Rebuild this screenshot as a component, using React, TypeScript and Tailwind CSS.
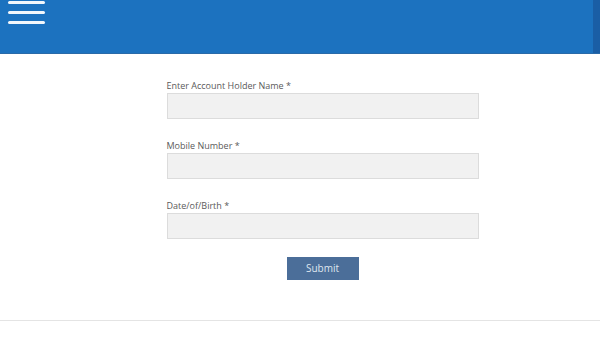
export default function App() {
  const fields = ["Enter Account Holder Name *", "Mobile Number *", "Date/of/Birth *"];
  return (
    <div className="h-[337px] w-[600px] overflow-hidden bg-white font-['Open_Sans',sans-serif]">
      <header className="flex h-[54px] border-b border-[#2a6aa8] bg-[#1c72bf]">
        <div className="flex flex-1 flex-col gap-[7px] pl-2 pt-[1px]">
          <span className="h-[3px] w-[37px] rounded-sm bg-[#f2f7fc]" />
          <span className="h-[3px] w-[37px] rounded-sm bg-[#f2f7fc]" />
          <span className="h-[3px] w-[37px] rounded-sm bg-[#f2f7fc]" />
        </div>
        <div className="w-[7px] bg-[#1a5ea5]" />
      </header>

      <main className="flex h-[267px] flex-col items-center border-b border-[#e4e4e4] pl-[45px]">
        <form className="mt-[26px] flex w-[312px] flex-col gap-[21px]">
          {fields.map((label) => (
            <div key={label} className="flex flex-col">
              <label className="mb-[1px] text-[9px] leading-[12px] text-[#5a5a5a]">{label}</label>
              <input className="h-[26px] w-full border border-[#dcdcdc] bg-[#f1f1f1]" />
            </div>
          ))}
        </form>
        <button className="mt-[18px] h-[23px] w-[72px] bg-[#4b6e99] text-[10px] text-[#dfe6ef]">
          Submit
        </button>
      </main>
    </div>
  );
}
